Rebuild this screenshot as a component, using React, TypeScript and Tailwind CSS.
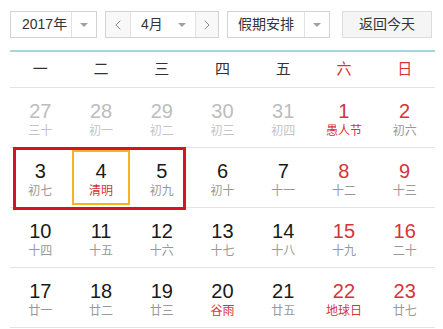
import { ChevronLeft, ChevronRight } from "lucide-react";

type Day = {
  n: number;
  lunar: string;
  muted?: boolean;
  red?: boolean;
  holiday?: boolean;
  selected?: boolean;
};

const weekDays = ["一", "二", "三", "四", "五", "六", "日"];

const rows: Day[][] = [
  [
    { n: 27, lunar: "三十", muted: true },
    { n: 28, lunar: "初一", muted: true },
    { n: 29, lunar: "初二", muted: true },
    { n: 30, lunar: "初三", muted: true },
    { n: 31, lunar: "初四", muted: true },
    { n: 1, lunar: "愚人节", red: true, holiday: true },
    { n: 2, lunar: "初六", red: true },
  ],
  [
    { n: 3, lunar: "初七" },
    { n: 4, lunar: "清明", holiday: true, selected: true },
    { n: 5, lunar: "初九" },
    { n: 6, lunar: "初十" },
    { n: 7, lunar: "十一" },
    { n: 8, lunar: "十二", red: true },
    { n: 9, lunar: "十三", red: true },
  ],
  [
    { n: 10, lunar: "十四" },
    { n: 11, lunar: "十五" },
    { n: 12, lunar: "十六" },
    { n: 13, lunar: "十七" },
    { n: 14, lunar: "十八" },
    { n: 15, lunar: "十九", red: true },
    { n: 16, lunar: "二十", red: true },
  ],
  [
    { n: 17, lunar: "廿一" },
    { n: 18, lunar: "廿二" },
    { n: 19, lunar: "廿三" },
    { n: 20, lunar: "谷雨", holiday: true },
    { n: 21, lunar: "廿五" },
    { n: 22, lunar: "地球日", red: true, holiday: true },
    { n: 23, lunar: "廿七", red: true },
  ],
];

function Caret() {
  return <span className="w-0 h-0 border-x-[4px] border-x-transparent border-t-[4px] border-t-[#a0a0a0]" />;
}

function DayCell({ d }: { d: Day }) {
  const numColor = d.muted ? "text-[#bdbdbd]" : d.red ? "text-[#d6333b]" : "text-[#1a1a1a]";
  const lunarColor = d.holiday ? "text-[#d6333b]" : d.muted ? "text-[#c4c4c4]" : "text-[#999]";
  return (
    <div className="h-full px-[1px] py-[2px]">
      <div
        className={`h-full flex flex-col items-center pt-[8px] border-2 ${
          d.selected ? "border-[#f5b523]" : "border-transparent"
        }`}
      >
        <span className={`text-[20px] leading-[22px] ${numColor}`}>{d.n}</span>
        <span className={`text-[12px] leading-[18px] ${lunarColor}`}>{d.lunar}</span>
      </div>
    </div>
  );
}

export default function App() {
  return (
    <div
      className="w-[443px] h-[329px] bg-white overflow-hidden px-[10px] pt-[11px]"
      style={{ fontFamily: '"Liberation Sans", "Noto Sans CJK SC", sans-serif' }}
    >
      {/* ツールバー */}
      <div className="flex items-center h-[27px] text-[14px] text-[#333]">
        <div className="flex h-full w-[87px] border border-[#d3d3d3] bg-white">
          <div className="flex-1 flex items-center pl-[11px]">2017年</div>
          <div className="w-[25px] flex items-center justify-center border-l border-[#e2e2e2]">
            <Caret />
          </div>
        </div>
        <div className="flex h-full w-[114px] ml-[8px] border border-[#d3d3d3] bg-white">
          <div className="w-[25px] flex items-center justify-center border-r border-[#e2e2e2] bg-[#f8f8f8] text-[#777]">
            <ChevronLeft size={16} strokeWidth={1.3} />
          </div>
          <div className="flex-1 flex items-center justify-between pl-[10px] pr-[9px]">
            <span>4月</span>
            <Caret />
          </div>
          <div className="w-[23px] flex items-center justify-center border-l border-[#e2e2e2] bg-[#f8f8f8] text-[#777]">
            <ChevronRight size={16} strokeWidth={1.3} />
          </div>
        </div>
        <div className="flex h-full w-[103px] ml-[8px] border border-[#d3d3d3] bg-white">
          <div className="flex-1 flex items-center justify-center">假期安排</div>
          <div className="w-[25px] flex items-center justify-center border-l border-[#e2e2e2]">
            <Caret />
          </div>
        </div>
        <button className="h-full w-[90px] ml-[12px] border border-[#dcdcdc] bg-[#f5f5f5] text-[#333] flex items-center justify-center">
          返回今天
        </button>
      </div>

      <div className="mt-[12px] w-[425px] h-[2px] bg-[#a9d3de]" />

      {/* 曜日 */}
      <div className="grid grid-cols-7 w-[425px] h-[36px] border-b border-[#e3e3e3] text-[15px] items-center text-center">
        {weekDays.map((w, i) => (
          <span key={w} className={i >= 5 ? "text-[#d6333b]" : "text-[#333]"}>
            {w}
          </span>
        ))}
      </div>

      {rows.map((row, ri) => (
        <div key={ri} className="relative grid grid-cols-7 w-[425px] h-[60px] border-b border-[#e3e3e3]">
          {row.map((d) => (
            <DayCell key={`${ri}-${d.n}`} d={d} />
          ))}
          {ri === 1 && (
            <div className="absolute left-[3px] top-[-1px] w-[173px] h-[63px] border-[3px] border-[#d7131d] pointer-events-none" />
          )}
        </div>
      ))}
    </div>
  );
}
